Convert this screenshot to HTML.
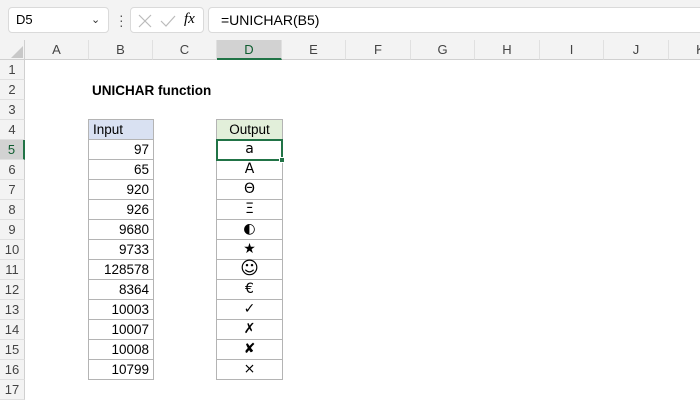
<!DOCTYPE html>
<html><head><meta charset="utf-8"><style>
*{margin:0;padding:0;box-sizing:border-box}
body{width:700px;height:400px;overflow:hidden;background:#fff;font-family:"Liberation Sans","DejaVu Sans",sans-serif;position:relative;font-size:13px;color:#000}
.a{position:absolute}
.top{left:0;top:0;width:700px;height:40px;background:#f3f3f3}
.box{background:#fff;border:1px solid #dadada;border-radius:4px}
.ch{top:40px;height:20px;background:#f3f3f3;border-right:1px solid #e0e0e0;border-bottom:1px solid #d0d0d0;text-align:center;line-height:20px;color:#444;font-size:13px}
.rh{left:0;width:25px;height:20px;background:#f3f3f3;border-bottom:1px solid #e0e0e0;border-right:1px solid #d0d0d0;text-align:center;line-height:20px;color:#444;font-size:13px}
.c{height:21px;border:1px solid #b4b4b4;line-height:19px;font-size:13.5px}
</style></head><body>
<div class="a top"></div>
<div class="a box" style="left:8px;top:7px;width:101px;height:26px;line-height:24px;padding-left:7px;font-size:13px">D5<span class="a" style="left:82px;top:0;font-size:11px;color:#333">&#8964;</span></div>
<div class="a" style="left:119px;top:13px;width:2px;height:14px;color:#555;font-size:14px;line-height:5px">·<br>·<br>·</div>
<div class="a box" style="left:130px;top:7px;width:74px;height:26px">
<svg class="a" style="left:7px;top:6px" width="14" height="14"><path d="M1 1L13 13M13 1L1 13" stroke="#bbb" stroke-width="1.2"/></svg>
<svg class="a" style="left:29px;top:6px" width="16" height="14"><path d="M1 7L6 12L15 2" stroke="#bbb" stroke-width="1.2" fill="none"/></svg>
<span class="a" style="left:53px;top:3px;font-family:'Liberation Serif',serif;font-style:italic;font-size:15px">fx</span></div>
<div class="a box" style="left:208px;top:7px;width:520px;height:26px;line-height:24px;padding-left:12px;font-size:14px">=UNICHAR(B5)</div>
<div class="a" style="left:0;top:40px;width:25px;height:20px;background:#f3f3f3;border-right:1px solid #d0d0d0;border-bottom:1px solid #d0d0d0"></div>
<svg class="a" style="left:11px;top:46px" width="12" height="12"><path d="M12 0L12 12L0 12Z" fill="#c8c8c8"/></svg>
<div id="g"></div>
<div class="a" style="left:92px;top:83px;font-weight:bold;font-size:13.5px">UNICHAR function</div>
<script>
var g=document.getElementById('g'),h='';
var xs=[25,89,153,217,282,346,411,475,540,604,669,733],L='ABCDEFGHIJK';
for(var i=0;i<11;i++){var sel=i==3;h+='<div class="a ch" style="left:'+xs[i]+'px;width:'+(xs[i+1]-xs[i])+'px;'+(sel?'background:#d2d2d2;color:#0e5c2f;border-bottom:2px solid #217346;':'')+'">'+L[i]+'</div>';}
for(var r=1;r<=17;r++){var y=60+(r-1)*20;var sel=r==5;h+='<div class="a rh" style="top:'+y+'px;'+(sel?'background:#d2d2d2;color:#0e5c2f;border-right:2px solid #217346;':'')+'">'+r+'</div>';}
var inp=[97,65,920,926,9680,9733,128578,8364,10003,10007,10008,10799];
var out=['a','A','Θ','Ξ','◐','★','☺','€','✓','✗','✘','⨯'];
h+='<div class="a c" style="left:88px;top:119px;width:66px;background:#d9e1f2;padding-left:4px">Input</div>';
h+='<div class="a c" style="left:216px;top:119px;width:67px;background:#e2efda;text-align:center">Output</div>';
for(var k=0;k<12;k++){var y=139+k*20;
h+='<div class="a c" style="left:88px;top:'+y+'px;width:66px;text-align:right;padding-right:4px">'+inp[k]+'</div>';
h+='<div class="a c" style="left:216px;top:'+y+'px;width:67px;text-align:center;font-family:\'DejaVu Sans\',sans-serif;'+(k==6?'font-size:18px;line-height:18px':'font-size:14px')+'">'+out[k]+'</div>';}
h+='<div class="a" style="left:216px;top:139px;width:67px;height:22px;border:2px solid #217346"></div>';
h+='<div class="a" style="left:279px;top:157px;width:6px;height:6px;background:#217346;border:1px solid #fff"></div>';
g.innerHTML=h;
</script>
</body></html>
